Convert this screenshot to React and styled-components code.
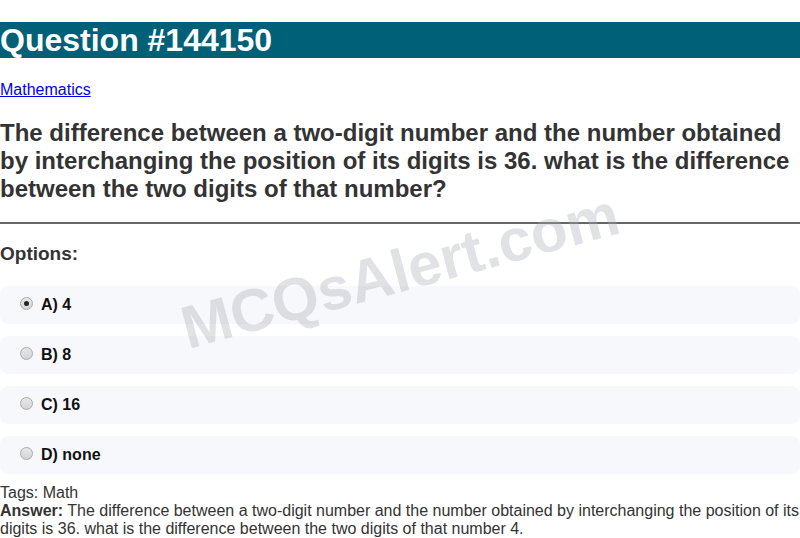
import React from "react";
import styled, { createGlobalStyle } from "styled-components";

const Global = createGlobalStyle`
  html, body { margin: 0; padding: 0; background: #fff; }
  body { font-family: "Liberation Sans", Arial, sans-serif; color: #333; }
`;

const Page = styled.div`
  position: relative;
  width: 800px;
  padding-top: 22px;
  overflow: hidden;
`;

const Title = styled.h1`
  margin: 0;
  background: #006078;
  color: #fff;
  font-size: 32px;
  line-height: 36px;
  font-weight: bold;
`;

const Category = styled.a`
  display: inline-block;
  margin-top: 23px;
  color: #0000ee;
  font-size: 16px;
  line-height: 18px;
  text-decoration: underline;
`;

const Question = styled.h2`
  margin: 20px 0 0;
  font-size: 24px;
  line-height: 28px;
  font-weight: bold;
  color: #333;
`;

const Divider = styled.hr`
  margin: 19px 0 0;
  border: 0;
  border-top: 2px solid #666;
  height: 0;
`;

const OptionsLabel = styled.h3`
  margin: 19px 0 0;
  font-size: 19px;
  line-height: 22px;
  font-weight: bold;
  color: #333;
`;

const OptionList = styled.div`
  display: flex;
  flex-direction: column;
  gap: 12px;
  margin-top: 21px;
`;

const Option = styled.label`
  display: flex;
  align-items: center;
  height: 38px;
  padding-left: 20px;
  background: #f7f8fc;
  border-radius: 8px;
  font-size: 16px;
  font-weight: bold;
  color: #111;
`;

const Radio = styled.span`
  position: relative;
  width: 11px;
  height: 11px;
  border-radius: 50%;
  border: 1px solid #aaa;
  background: linear-gradient(#e8e8e8, #d4d4d4);
  margin-right: 8px;
  margin-top: -3px;
  &::after {
    content: "";
    display: ${(p) => (p.$checked ? "block" : "none")};
    position: absolute;
    left: 3px;
    top: 3px;
    width: 5px;
    height: 5px;
    border-radius: 50%;
    background: #222;
  }
`;

const Meta = styled.div`
  margin-top: 10px;
  font-size: 16px;
  line-height: 18px;
  color: #333;
`;

const Watermark = styled.div`
  position: absolute;
  left: 400px;
  top: 271px;
  transform: translate(-50%, -50%) rotate(-15deg);
  font-size: 60px;
  font-weight: bold;
  color: rgba(170, 172, 180, 0.35);
  white-space: nowrap;
  pointer-events: none;
`;

const options = [
  { label: "A) 4", checked: true },
  { label: "B) 8" },
  { label: "C) 16" },
  { label: "D) none" },
];

export default function App() {
  return (
    <>
      <Global />
      <Page>
        <Title>Question #144150</Title>
        <Category href="#">Mathematics</Category>
        <Question>
          The difference between a two-digit number and the number obtained by
          interchanging the position of its digits is 36. what is the difference
          between the two digits of that number?
        </Question>
        <Divider />
        <OptionsLabel>Options:</OptionsLabel>
        <OptionList>
          {options.map((o) => (
            <Option key={o.label}>
              <Radio $checked={o.checked} />
              {o.label}
            </Option>
          ))}
        </OptionList>
        <Meta>
          <div>Tags: Math</div>
          <div>
            <b>Answer:</b> The difference between a two-digit number and the
            number obtained by interchanging the position of its digits is 36.
            what is the difference between the two digits of that number 4.
          </div>
        </Meta>
        <Watermark>MCQsAlert.com</Watermark>
      </Page>
    </>
  );
}
